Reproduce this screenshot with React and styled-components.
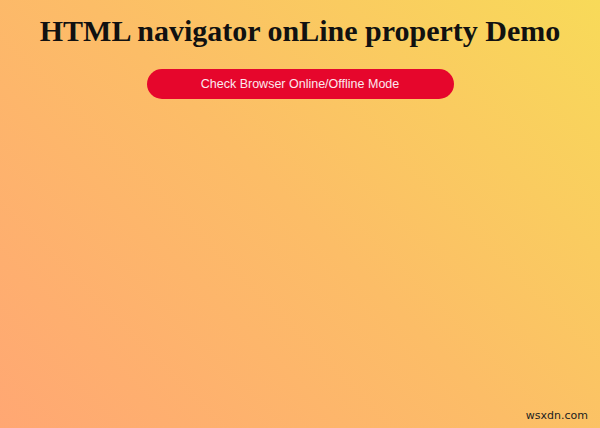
import React, { useState } from 'react';
import styled, { createGlobalStyle } from 'styled-components';

const GlobalStyle = createGlobalStyle`
  html, body {
    margin: 0;
    padding: 0;
    height: 100%;
  }
  #root {
    height: 100%;
  }
`;

const Page = styled.div`
  box-sizing: border-box;
  height: 428px;
  width: 100%;
  position: relative;
  overflow: hidden;
  display: flex;
  flex-direction: column;
  align-items: center;
  padding-top: 13px;
  background: linear-gradient(45deg, #ffa773 0%, #fcbd67 50%, #f8da59 100%);
`;

const Title = styled.h1`
  margin: 0;
  font-family: 'Liberation Serif', 'Times New Roman', serif;
  font-weight: bold;
  font-size: 30px;
  line-height: 36px;
  color: #111;
  text-align: center;
`;

const CheckButton = styled.button`
  margin-top: 20px;
  width: 307px;
  height: 30px;
  border: none;
  border-radius: 15px;
  background: #e6062c;
  color: #fbe9ee;
  font-family: 'Liberation Sans', Arial, sans-serif;
  font-size: 12.5px;
  cursor: pointer;
`;

const Status = styled.p`
  margin: 12px 0 0;
  font-family: 'Liberation Sans', Arial, sans-serif;
  font-size: 14px;
  color: #222;
`;

const Watermark = styled.span`
  position: absolute;
  right: 12px;
  bottom: 6px;
  font-family: 'DejaVu Sans', 'Liberation Sans', sans-serif;
  font-size: 11px;
  color: #222;
`;

const App = () => {
  const [status, setStatus] = useState('');

  const onCheck = () => {
    setStatus(navigator.onLine ? 'Browser is Online' : 'Browser is Offline');
  };

  return (
    <>
      <GlobalStyle />
      <Page>
        <Title>HTML navigator onLine property Demo</Title>
        <CheckButton onClick={onCheck}>Check Browser Online/Offline Mode</CheckButton>
        {status && <Status>{status}</Status>}
        <Watermark>wsxdn.com</Watermark>
      </Page>
    </>
  );
};

export default App;
